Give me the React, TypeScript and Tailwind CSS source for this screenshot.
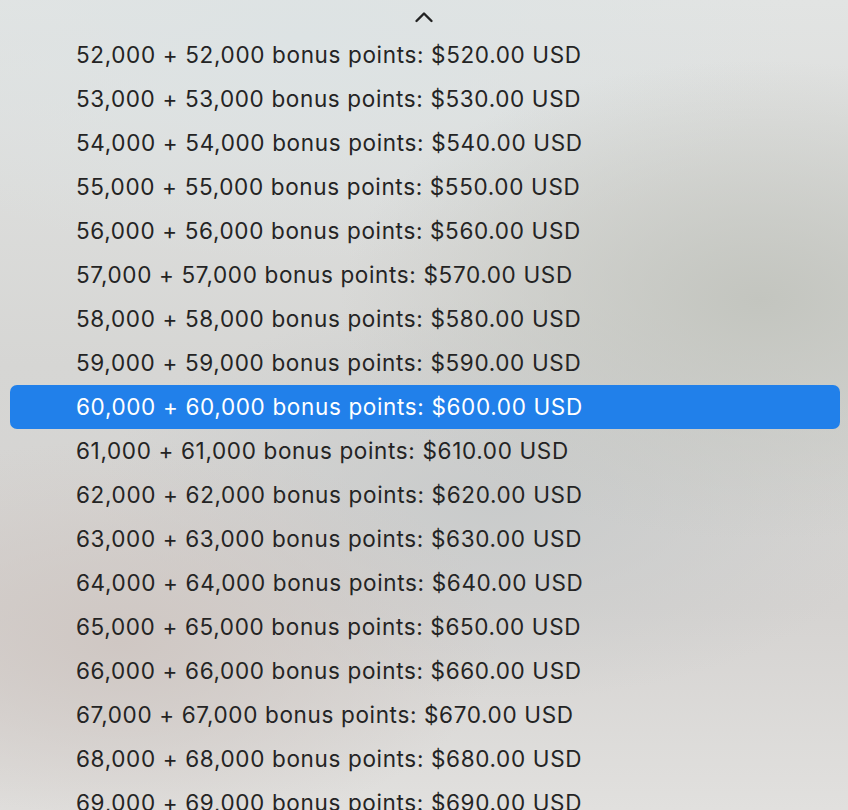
import React from "react";

const ChevronUp = () => (
  <svg width="20" height="12" viewBox="0 0 20 12" fill="none">
    <path d="M2.5 10L10 2.5L17.5 10" stroke="#222" strokeWidth="2.4" strokeLinecap="round" strokeLinejoin="round" />
  </svg>
);

const fmt = (n: number) => n.toLocaleString("en-US");

const items = Array.from({ length: 18 }, (_, i) => {
  const k = 52 + i;
  const pts = fmt(k * 1000);
  return { id: k, label: `${pts} + ${pts} bonus points: $${k * 10}.00 USD` };
});

export default function App() {
  return (
    <div className="relative h-[810px] w-[848px] overflow-hidden bg-[#dedfdd] font-['Inter','Helvetica_Neue',sans-serif]">
      <div className="absolute inset-0 bg-[radial-gradient(ellipse_420px_240px_at_760px_300px,#c3c5bf_0%,transparent_100%),radial-gradient(ellipse_380px_200px_at_120px_640px,#cfc7c3_0%,transparent_100%),radial-gradient(ellipse_500px_220px_at_300px_40px,#dde3e4_0%,transparent_100%),radial-gradient(ellipse_400px_200px_at_500px_500px,#c9cbcb_0%,transparent_100%),linear-gradient(180deg,#e2e4e3_0%,#d6d6d4_45%,#d5d3d1_75%,#e1e0de_100%)]" />
      <div className="relative flex flex-col">
        <div className="flex h-[33px] items-start justify-center pt-[11px]">
          <ChevronUp />
        </div>
        <ul className="flex flex-col pl-[10px] pr-[8px]">
          {items.map((it) => {
            const active = it.id === 60;
            return (
              <li
                key={it.id}
                className={
                  active
                    ? "flex h-[44px] items-center rounded-[7px] bg-[#2180ea] pl-[66px] text-[22.5px] tracking-[0.65px] text-white"
                    : "flex h-[44px] items-center pl-[66px] text-[22.5px] tracking-[0.65px] text-[#242424]"
                }
              >
                {it.label}
              </li>
            );
          })}
        </ul>
      </div>
    </div>
  );
}
